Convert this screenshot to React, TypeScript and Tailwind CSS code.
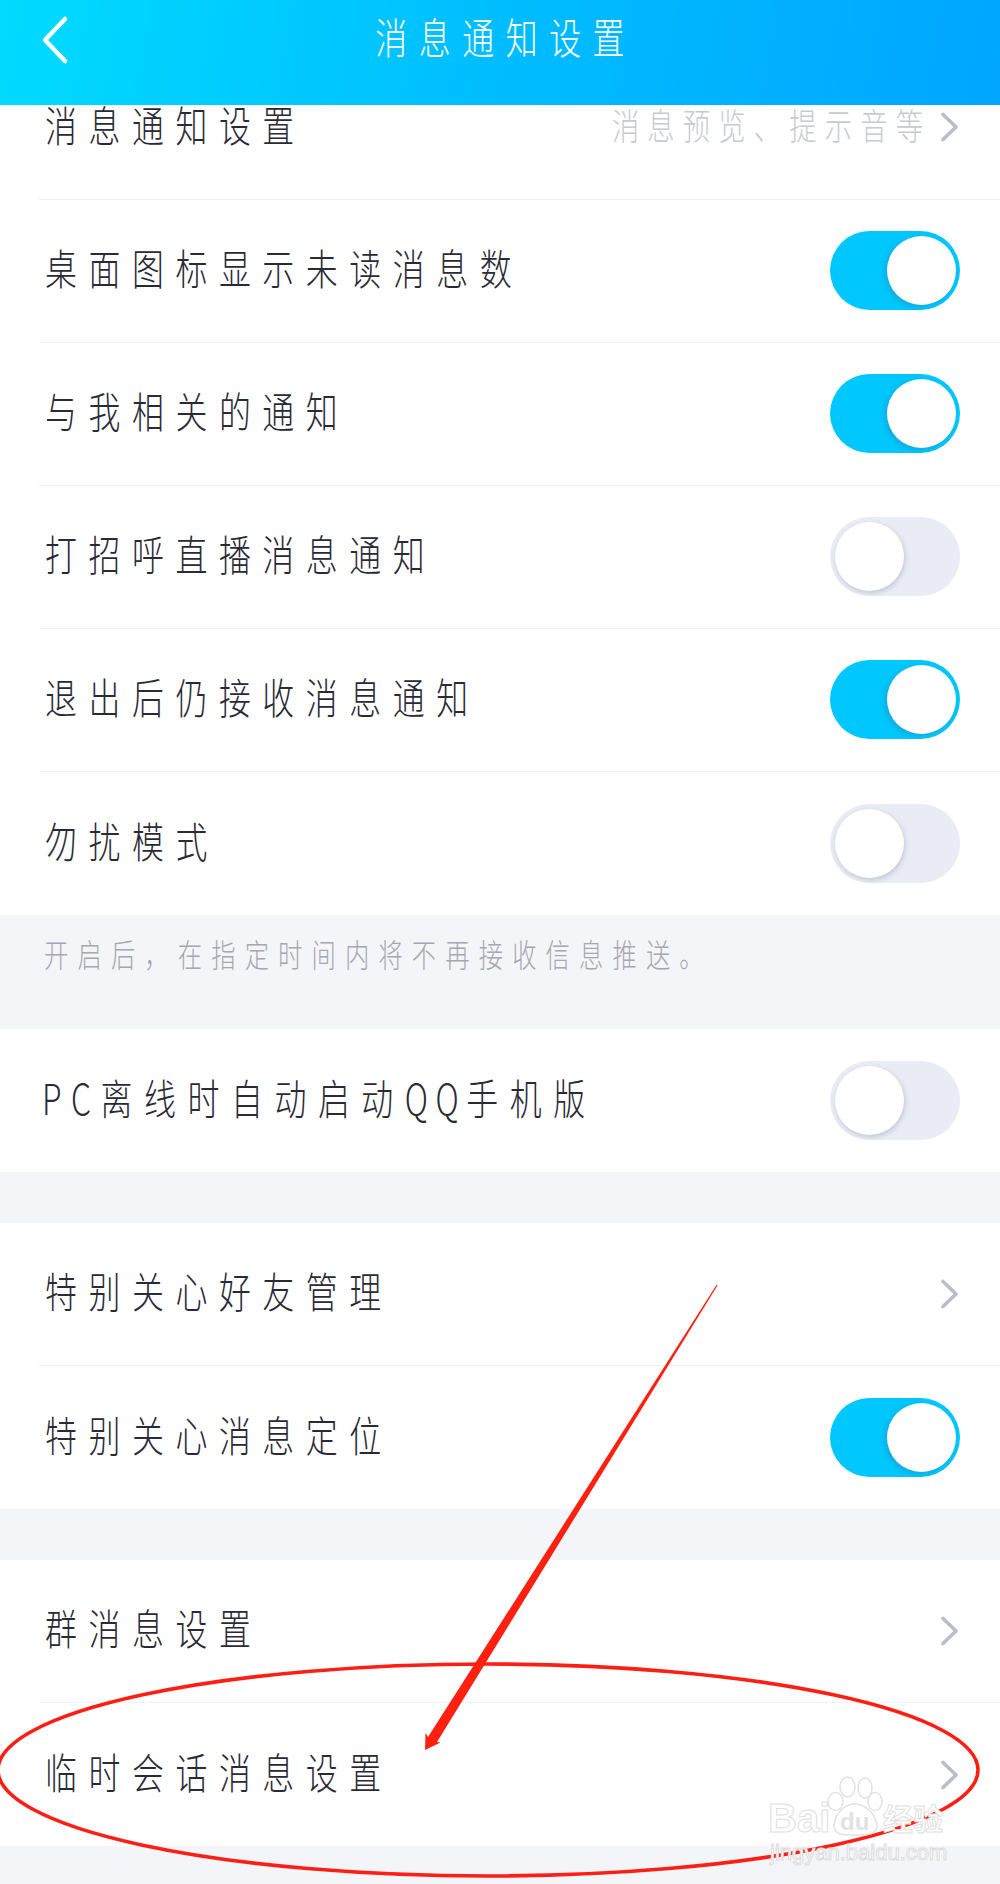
import type { ReactNode } from "react";

const cjk = "font-['Noto_Sans_CJK_SC','Noto_Sans',sans-serif]";

const Chevron = () => (
  <svg width="20" height="30" viewBox="0 0 20 30" fill="none" className="shrink-0">
    <path d="M3 2.5 L16 15 L3 27.5" stroke="#b9bdcc" strokeWidth="3.6" strokeLinecap="round" strokeLinejoin="round" />
  </svg>
);

const Toggle = ({ on }: { on?: boolean }) =>
  on ? (
    <div className="mb-[1px] flex h-[79px] w-[130px] shrink-0 items-center justify-end rounded-full bg-[#00c8ff] pr-1">
      <div className="h-[69px] w-[69px] rounded-full bg-white shadow-[-2px_2px_6px_rgba(60,90,120,0.3)]" />
    </div>
  ) : (
    <div className="mb-[1px] flex h-[79px] w-[130px] shrink-0 items-center rounded-full bg-[#e9ebf5] pl-[5px]">
      <div className="h-[69px] w-[69px] rounded-full bg-white shadow-[1px_2px_5px_rgba(120,125,160,0.35)]" />
    </div>
  );

const Label = ({ children }: { children: ReactNode }) => (
  <span className={`${cjk} mb-[8px] inline-block origin-left scale-x-[0.76] text-[42px] leading-none font-light tracking-[15.2px] whitespace-nowrap text-[#2a2a36]`}>
    {children}
  </span>
);

const Row = ({ label, right, last }: { label: ReactNode; right?: ReactNode; last?: boolean }) => (
  <div className={`ml-[39px] flex h-[143px] items-center justify-between pr-[40px] pl-[6px] ${last ? "" : "border-b border-[#f0f1f5]"}`}>
    <Label>{label}</Label>
    {right}
  </div>
);

const Gap = () => <div className="h-[51px] bg-[#f4f5f9]" />;

export default function App() {
  return (
    <div className="relative h-[1884px] w-full overflow-hidden bg-white">
      <header className="absolute inset-x-0 top-0 z-10 flex h-[105px] items-start justify-center bg-[linear-gradient(100deg,#00dbff,#00bdff_50%,#00a6ff)] pt-[15px]">
        <svg width="30" height="50" viewBox="0 0 30 50" fill="none" className="absolute top-[15px] left-[40px]">
          <path d="M25 4 L5 25 L25 46" stroke="white" strokeWidth="4.5" strokeLinecap="round" strokeLinejoin="round" />
        </svg>
        <span className={`${cjk} inline-block scale-x-[0.76] pl-[16px] text-[42px] leading-none font-light tracking-[15.2px] whitespace-nowrap text-white`}>
          消息通知设置
        </span>
      </header>

      <main className="pt-[57px]">
        <section>
          <Row
            label="消息通知设置"
            right={
              <div className="mb-[2px] flex items-center gap-[9px]">
                <span className={`${cjk} mb-[6px] inline-block origin-right scale-x-[0.76] text-[36px] leading-none font-light tracking-[10.7px] whitespace-nowrap text-[#c8cad3]`}>
                  消息预览、提示音等
                </span>
                <Chevron />
              </div>
            }
          />
          <Row label="桌面图标显示未读消息数" right={<Toggle on />} />
          <Row label="与我相关的通知" right={<Toggle on />} />
          <Row label="打招呼直播消息通知" right={<Toggle />} />
          <Row label="退出后仍接收消息通知" right={<Toggle on />} />
          <Row label="勿扰模式" right={<Toggle />} last />
        </section>

        <div className="h-[114px] bg-[#f4f5f9] pt-[22px] pl-[44px]">
          <span className={`${cjk} inline-block origin-left scale-x-[0.76] text-[32px] leading-none font-light tracking-[12px] whitespace-nowrap text-[#a6a7af]`}>
            开启后，在指定时间内将不再接收信息推送。
          </span>
        </div>

        <Row
          label={
            <span className="-ml-[4px] inline-block">
              <span className="tracking-[12.5px]">PC</span>离线时自动启动<span className="tracking-[10px]">QQ</span>手机版
            </span>
          }
          right={<Toggle />}
          last
        />
        <Gap />

        <section>
          <Row label="特别关心好友管理" right={<Chevron />} />
          <Row label="特别关心消息定位" right={<Toggle on />} last />
        </section>
        <Gap />

        <section>
          <Row label="群消息设置" right={<Chevron />} />
          <Row label="临时会话消息设置" right={<Chevron />} last />
        </section>
        <div className="h-[38px] bg-[#f4f5f9]" />
      </main>

      {/* annotation drawn on top of the screenshot */}
      <svg className="pointer-events-none absolute top-0 left-0 z-20" width="1000" height="1884" viewBox="0 0 1000 1884" fill="none">
        <ellipse cx="488" cy="1770" rx="490" ry="106" stroke="#ff1e14" strokeWidth="3.6" />
        <polygon points="717.6,1285.3 437,1742 440.5,1742.5 425,1750 425.5,1733 428,1737 716.6,1284.8" fill="#ff2010" />
      </svg>

      {/* watermark */}
      <div className="pointer-events-none absolute top-[1775px] left-[766px] z-30 h-[95px] w-[190px]">
        <svg className="absolute top-0 left-[54px]" width="70" height="64" viewBox="0 0 70 64" fill="none" stroke="#e2e2e2" strokeWidth="1.5">
          <ellipse cx="15.5" cy="26.5" rx="7.5" ry="9" />
          <ellipse cx="27.5" cy="12" rx="7.5" ry="10" />
          <ellipse cx="45" cy="13" rx="7" ry="10" />
          <ellipse cx="55" cy="26.5" rx="7" ry="9" />
          <path d="M14 50 C16 36 26 29 35 29 C45 29 55 38 57 50 C57 60 48 60 35 60 C22 60 14 60 14 50 Z" fill="#ffffff" />
        </svg>
        <span className="absolute top-[23px] left-[2px] font-['Liberation_Sans',sans-serif] text-[40px] leading-none font-bold text-white [-webkit-text-stroke:1px_#e0e0e0]">
          Bai
        </span>
        <span className="absolute top-[35px] left-[74px] font-['Liberation_Sans',sans-serif] text-[24px] leading-none font-bold text-[#e2e2e2]">
          du
        </span>
        <span className={`${cjk} absolute top-[27px] left-[117px] text-[30px] leading-none font-bold whitespace-nowrap text-white [-webkit-text-stroke:1px_#e0e0e0]`}>
          经验
        </span>
        <span className="absolute top-[67px] left-[4px] font-['Liberation_Sans',sans-serif] text-[22px] leading-none whitespace-nowrap text-white [-webkit-text-stroke:1px_#dcdcdc]">
          jingyan.baidu.com
        </span>
      </div>
    </div>
  );
}
